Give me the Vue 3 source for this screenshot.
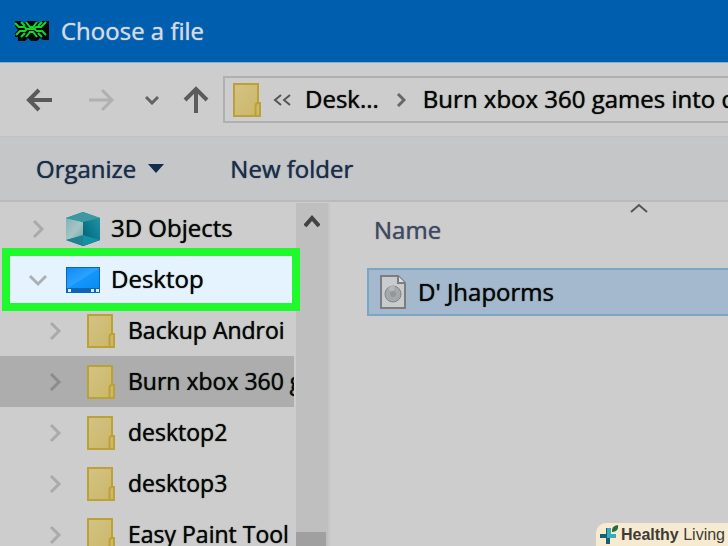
<script setup>
import { ref } from 'vue'

const selected = ref('Burn xbox 360 games into disc')
const rows = [
  { name: '3D Objects', icon: 'cube', level: 0 },
  { name: 'Desktop', icon: 'desktop', level: 0, open: true },
  { name: 'Backup Androi', icon: 'folder', level: 1 },
  { name: 'Burn xbox 360 games into disc', icon: 'folder', level: 1 },
  { name: 'desktop2', icon: 'folder', level: 1 },
  { name: 'desktop3', icon: 'folder', level: 1 },
  { name: 'Easy Paint Tool', icon: 'folder', level: 1 }
]
</script>

<template>
  <div class="dialog">
    <svg class="defs" width="0" height="0" aria-hidden="true">
      <defs>
        <linearGradient id="paper" x1="0" y1="0" x2="1" y2="1">
          <stop offset="0" stop-color="#d3c384" />
          <stop offset="1" stop-color="#cbb768" />
        </linearGradient>
        <linearGradient id="screen" x1="0" y1="0" x2="1" y2="1">
          <stop offset="0" stop-color="#0d8cf5" />
          <stop offset=".5" stop-color="#2ba2ff" />
          <stop offset=".52" stop-color="#1496fc" />
          <stop offset="1" stop-color="#0a8bf5" />
        </linearGradient>
        <linearGradient id="cubeLeft" x1="0" y1="0" x2="1" y2="1">
          <stop offset="0" stop-color="#7fb4b8" />
          <stop offset=".55" stop-color="#a6c4c3" />
          <stop offset="1" stop-color="#6fa9ad" />
        </linearGradient>
        <linearGradient id="cubeRight" x1="1" y1="0" x2="0" y2="1">
          <stop offset="0" stop-color="#2490a0" />
          <stop offset=".5" stop-color="#0c7a8f" />
          <stop offset="1" stop-color="#05586c" />
        </linearGradient>
        <symbol id="folder" viewBox="0 0 28 34">
          <path d="M1 1H25V20H27V33H1Z" fill="url(#paper)" stroke="#bca137" stroke-width="2" />
          <path d="M22.500 32V23Q22.500 20 25 20" fill="none" stroke="#bca137" stroke-width="2" />
        </symbol>
        <symbol id="desktop" viewBox="0 0 34 26">
          <path d="M0 0H34V26H0Z" fill="#0b67b5" />
          <path d="M1 1H33V21H1Z" fill="url(#screen)" />
          <path d="M2 22H5V25H2ZM25 22H28V25H25ZM30 22H33V25H30Z" fill="#d9efff" />
        </symbol>
        <symbol id="cube" viewBox="0 0 34 34">
          <path d="M0 6L17 0L34 6V28L17 34L0 28Z" fill="#147d8d" />
          <path d="M0 6L17 10V24L0 28Z" fill="url(#cubeLeft)" />
          <path d="M17 10L34 6V28L17 34Z" fill="url(#cubeRight)" />
          <path d="M0 6L17 0L34 6L17 10Z" fill="#3d98a4" />
          <path d="M0 28L17 23V34Z" fill="#1d8390" />
          <path d="M17 23L34 28L17 34Z" fill="#1590a4" />
        </symbol>
      </defs>
    </svg>

    <header class="title">
      <svg width="36" height="22" viewBox="0 0 36 22" aria-hidden="true">
        <path d="M1 1H7L10 3L13 1H22L25 3L28 1H35V20H29L26 18L23 21H17L14 18L11 21H4V17H1V13L4 10L1 6Z" fill="#020806" />
        <path d="M1 3L5 7H10L13 9M7 2L11 6M12 2L16 7H19L23 2M32 2L27 7H22L20 9M28 2L24 6M13 9H20M2 15L6 11H11L13 9M7 17L11 13M12 17L16 12H19L23 17M20 9L23 11H28L32 15M28 17L24 13" fill="none" stroke="#18d52b" stroke-width="2" />
      </svg>
      <h1>Choose a file</h1>
    </header>

    <nav class="navigation" aria-label="Folder navigation">
      <button class="arrow" aria-label="Back">
        <svg width="26" height="24" viewBox="0 0 26 24"><path d="M26 12H3M13 2L3 12L13 22" fill="none" stroke="#595959" stroke-width="4" /></svg>
      </button>
      <button class="arrow forward" aria-label="Forward">
        <svg width="26" height="24" viewBox="0 0 26 24"><path d="M0 12H23M13 2L23 12L13 22" fill="none" stroke="#b0b0b0" stroke-width="3" /></svg>
      </button>
      <button class="arrow recent" aria-label="Recent locations">
        <svg width="14" height="10" viewBox="0 0 14 10"><path d="M1 2L7 8L13 2" fill="none" stroke="#626262" stroke-width="3" /></svg>
      </button>
      <button class="arrow" aria-label="Up">
        <svg width="26" height="28" viewBox="0 0 26 28"><path d="M13 27V3M2 14L13 3L24 14" fill="none" stroke="#5b5b5b" stroke-width="4" /></svg>
      </button>
      <div class="address">
        <svg width="28" height="34" aria-hidden="true"><use href="#folder" /></svg>
        <button class="more" aria-label="Parent folders">
          <svg width="18" height="12" viewBox="0 0 18 12"><path d="M8 1L2 6L8 11M17 1L11 6L17 11" fill="none" stroke="#555" stroke-width="2" /></svg>
        </button>
        <a class="parent" href="#">Desk...</a>
        <svg class="crumb" width="10" height="14" viewBox="0 0 10 14" aria-hidden="true"><path d="M2 1L8 7L2 13" fill="none" stroke="#686868" stroke-width="3" /></svg>
        <a href="#">Burn xbox 360 games into disc</a>
      </div>
    </nav>

    <div class="toolbar">
      <button class="organize">Organize
        <svg width="16" height="9" viewBox="0 0 16 9" aria-hidden="true"><path d="M0 0H16L8 9Z" fill="#142c4d" /></svg>
      </button>
      <button>New folder</button>
    </div>

    <main class="browser">
      <aside class="tree">
        <button
          v-for="row in rows"
          :key="row.name"
          class="row"
          :class="{ child: row.level, open: row.open, selected: selected === row.name }"
          @click="selected = row.name"
        >
          <svg v-if="row.open" class="chevron" width="20" height="20" viewBox="0 0 20 20" aria-hidden="true"><path d="M2 6L10 14L18 6" fill="none" stroke="#aab0b5" stroke-width="3" /></svg>
          <svg v-else class="chevron" width="20" height="20" viewBox="0 0 20 20" aria-hidden="true"><path d="M6 2L14 10L6 18" fill="none" stroke="currentColor" stroke-width="3" /></svg>
          <svg v-if="row.icon === 'folder'" class="icon" width="28" height="34" aria-hidden="true"><use href="#folder" /></svg>
          <svg v-else-if="row.icon === 'cube'" class="icon" width="34" height="34" aria-hidden="true"><use href="#cube" /></svg>
          <svg v-else class="icon" width="34" height="26" aria-hidden="true"><use href="#desktop" /></svg>
          <span>{{ row.name }}</span>
        </button>
      </aside>

      <div class="scrollbar">
        <button aria-label="Scroll up">
          <svg width="16" height="14" viewBox="0 0 16 14"><path d="M1 12L8 4L15 12" fill="none" stroke="#424242" stroke-width="4" /></svg>
        </button>
        <div class="thumb"></div>
      </div>

      <section class="files">
        <button class="column">Name
          <svg class="sort" width="18" height="10" viewBox="0 0 18 10" aria-hidden="true"><path d="M1 9L9 2L17 9" fill="none" stroke="#555" stroke-width="2" /></svg>
        </button>
        <button class="file">
          <svg width="26" height="34" viewBox="0 0 26 34" aria-hidden="true">
            <path d="M1 1H18L25 8V33H1Z" fill="#c9cccd" stroke="#7b7d7f" stroke-width="2" />
            <path d="M18 1V8H25" fill="#dddfe0" stroke="#7b7d7f" stroke-width="2" />
            <circle cx="13" cy="19" r="8" fill="#a4a8aa" stroke="#818587" />
            <path d="M13 19L8 13A8 8 0 0 1 15 11Z" fill="#b4b8ba" />
            <circle cx="13" cy="19" r="3" fill="#92979a" />
          </svg>
          <span>D' Jhaporms</span>
        </button>
      </section>
    </main>

    <footer class="brand">
      <svg width="20" height="22" viewBox="0 0 20 22" aria-hidden="true">
        <path d="M8 4V20M0 12H16" stroke="#176074" stroke-width="4" />
        <path d="M9 4V12H16" fill="none" stroke="#38abb4" stroke-width="4" />
        <path d="M12 8Q11 2 18 1Q19 8 12 8Z" fill="#286b3e" />
      </svg>
      <span><b>Healthy</b> Living</span>
    </footer>
  </div>
</template>

<style>
body {
  margin: 0;
  overflow: hidden;
}
</style>

<style scoped>
.dialog {
  position: relative;
  display: flex;
  flex-direction: column;
  height: 100vh;
  overflow: hidden;
  background: #cdcdcd;
  color: #080808;
  font-family: "Segoe UI", "Open Sans", "Noto Sans", sans-serif;
  font-size: 24px;
  line-height: 32px;
  text-shadow: 0 0 1px currentColor;
  white-space: nowrap;
}
.defs {
  position: absolute;
}
svg {
  display: block;
  flex: none;
}
button {
  border: 0;
  padding: 0;
  background: transparent;
  color: inherit;
  font: inherit;
  text-align: left;
  text-shadow: inherit;
}
a {
  color: inherit;
  text-decoration: none;
}
.title {
  display: flex;
  align-items: center;
  flex: none;
  gap: 11px;
  height: 62px;
  padding-left: 14px;
  border-bottom: 1px solid #84add0;
  background: #005eae;
  color: #d2dae2;
}
h1 {
  margin: 0;
  font-size: inherit;
  font-weight: 400;
}
.navigation {
  display: flex;
  align-items: center;
  flex: none;
  height: 73px;
  padding-left: 26px;
  border-bottom: 1px solid #bfc1c4;
}
.forward {
  margin-left: 37px;
}
.recent {
  margin: 0 24px 0 30px;
}
.address {
  display: flex;
  align-items: center;
  flex: 1;
  min-width: 0;
  height: 43px;
  margin-left: 14px;
  padding-left: 8px;
  border: 2px solid #aeb0b1;
  border-right: 0;
  overflow: hidden;
}
.address a {
  padding-bottom: 2px;
}
.more {
  margin: 0 14px 0 12px;
}
.crumb {
  margin: 0 17px;
}
.toolbar {
  display: flex;
  align-items: center;
  flex: none;
  gap: 66px;
  height: 63px;
  padding-left: 36px;
  border-bottom: 2px solid #b9babc;
  background: #c4c6c8;
  color: #1c2d4a;
}
.organize {
  display: flex;
  align-items: center;
  gap: 12px;
}
.browser {
  display: grid;
  grid-template-columns: 294px 36px 1fr;
  grid-template-rows: minmax(0, 1fr);
  flex: 1;
  min-height: 0;
  padding-top: 1px;
}
.tree {
  min-width: 0;
}
.row {
  display: flex;
  align-items: center;
  width: 100%;
  height: 51px;
  padding-left: 28px;
  overflow: hidden;
  color: #080808;
}
.row span {
  margin-left: 11px;
  padding-bottom: 2px;
}
.chevron {
  margin-right: 18px;
  color: #aaa;
}
.child {
  padding-left: 45px;
  font-size: 23px;
}
.child .chevron {
  margin-right: 22px;
}
.child span {
  margin-left: 13px;
}
.selected {
  background: #adadad;
}
.selected .chevron {
  color: #8c8c8c;
}
.open {
  position: relative;
  background: #e5f3ff;
  overflow: visible;
}
.open::after {
  content: "";
  position: absolute;
  inset: -6px -6px -6px 2px;
  border: 8px solid #20fa2c;
  box-shadow: -2px 0 0 #cdcdcd;
}
.scrollbar {
  display: flex;
  flex-direction: column;
  justify-content: space-between;
  margin-left: 2px;
  border-right: 2px solid #c6c6c6;
  background: #bfbfbf;
}
.scrollbar button {
  padding: 11px 0 0 8px;
}
.thumb {
  height: 14px;
  margin-right: 2px;
  background: #a0a0a0;
}
.files {
  min-width: 0;
}
.column {
  position: relative;
  display: block;
  width: 100%;
  padding: 11px 0 0 44px;
  color: #414962;
}
.sort {
  position: absolute;
  top: 0;
  left: 300px;
}
.file {
  display: flex;
  align-items: center;
  gap: 12px;
  width: calc(100% - 37px);
  height: 48px;
  margin: 22px 0 0 37px;
  padding-left: 11px;
  border: 2px solid #7ba5c5;
  border-right: 0;
  background: #a4b9cd;
  color: #080808;
}
.brand {
  position: absolute;
  right: 0;
  bottom: 0;
  display: flex;
  align-items: center;
  gap: 1px;
  height: 23px;
  padding: 0 3px 0 4px;
  border-radius: 10px 0 0 0;
  background: #f6ebd0;
  color: #3f3b36;
  font-family: "Liberation Sans", Arial, sans-serif;
  font-size: 16px;
  line-height: 22px;
  text-shadow: none;
}
</style>
